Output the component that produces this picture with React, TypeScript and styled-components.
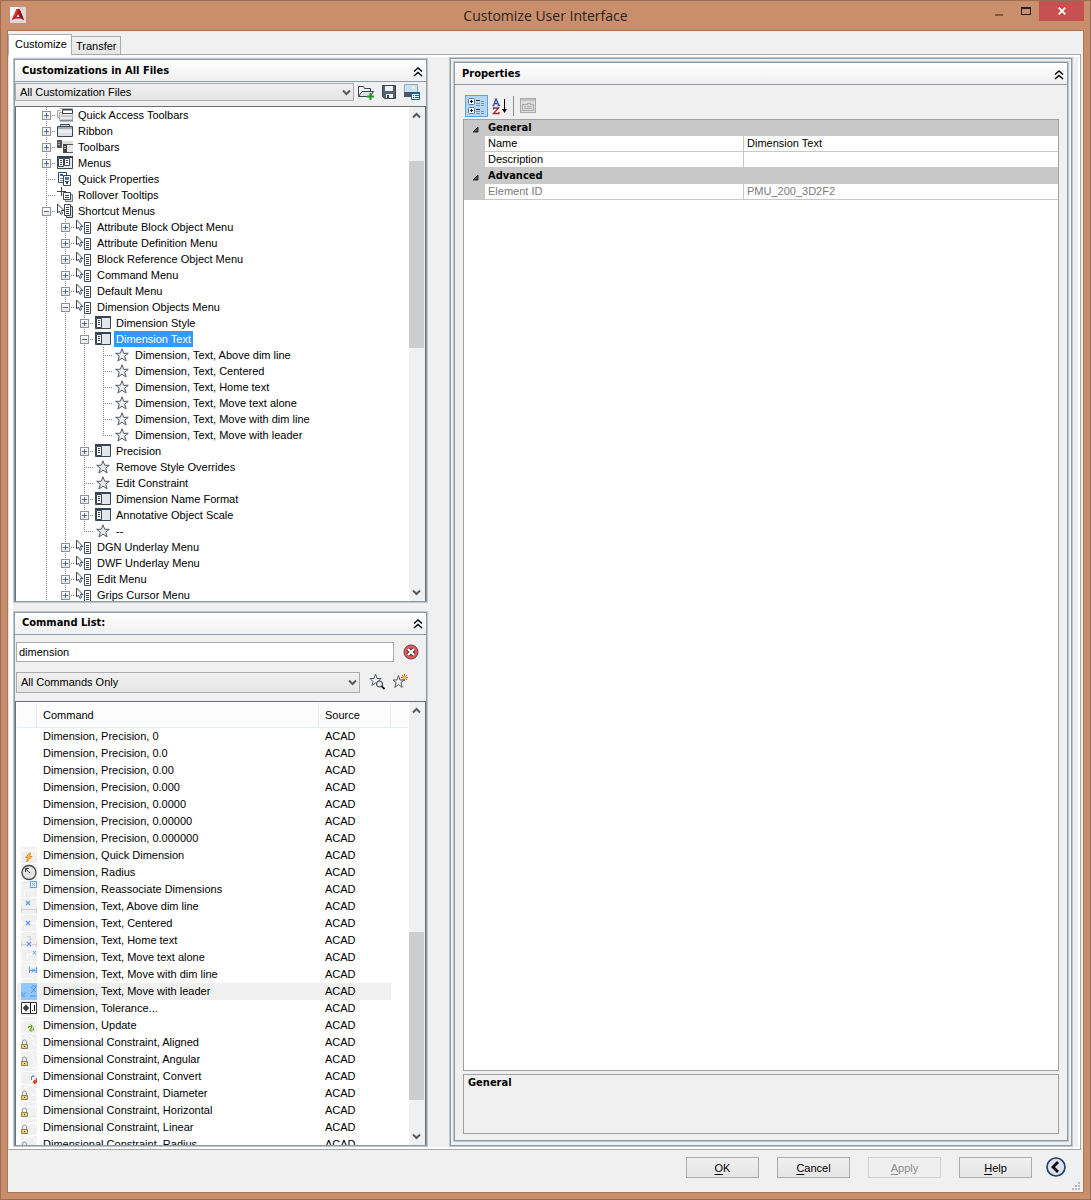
import React from "react";
import styled, { createGlobalStyle, css } from "styled-components";

const face = "#f0f0f0";
const line = "#8f9ba6";
const ui = `"Liberation Sans", Arial, sans-serif`;
const strong = `"DejaVu Sans Condensed", "DejaVu Sans", sans-serif`;

const Global = createGlobalStyle`
  *, *::before, *::after { box-sizing: border-box; }
  body { margin: 0; background: #c98f6c; }
  button, input, select { font: inherit; color: inherit; margin: 0; border-radius: 0; }
`;

/* ---------- window ---------- */

const Window = styled.div`
  height: 100vh;
  min-height: 600px;
  display: flex;
  flex-direction: column;
  padding: 0 6px 6px;
  border: 1px solid #9c6c54;
  background: #c98f6c;
  font: 11px/16px ${ui};
  color: #000;
`;

const TitleBar = styled.header`
  flex: none;
  height: 29px;
  display: grid;
  grid-template-columns: 1fr auto 1fr;
  align-items: start;
`;

const Logo = styled.svg`
  width: 16px;
  height: 16px;
  margin: 6px 0 0 3px;
`;

const Title = styled.h1`
  margin: 0;
  font: 400 14px/29px "Open Sans", sans-serif;
  color: #2b211b;
`;

const Controls = styled.div`
  display: flex;
  justify-content: flex-end;
`;

const ControlButton = styled.button<{ $close?: boolean }>`
  width: ${(p) => (p.$close ? 45 : 27)}px;
  height: 20px;
  padding: 0;
  border: 0;
  background: ${(p) => (p.$close ? "#c75050" : "transparent")};
  display: grid;
  place-items: center;
`;

const Client = styled.div`
  flex: 1;
  min-height: 0;
  display: flex;
  flex-direction: column;
  border: 1px solid #ab7557;
  background: ${face};
`;

const TabStrip = styled.div`
  flex: none;
  height: 23px;
  padding-top: 3px;
  display: flex;
  align-items: flex-end;
`;

const Tab = styled.button<{ $active?: boolean }>`
  height: ${(p) => (p.$active ? 21 : 18)}px;
  padding: ${(p) => (p.$active ? "0 4px 2px 6px" : "0 3px 0 4px")};
  border: 1px solid #acacac;
  border-bottom: 0;
  background: ${(p) => (p.$active ? "#fff" : "linear-gradient(#f0f0f0, #e6e6e6)")};
  ${(p) =>
    p.$active
      ? css`
          position: relative;
          margin-bottom: -1px;
        `
      : css`
          border-left: 0;
        `}
`;

const TabPage = styled.main`
  flex: 1;
  min-height: 0;
  display: flex;
  margin-right: 2px;
  border: 1px solid #a8a8a8;
  border-left-color: #e4e4e4;
  padding: 2px 2px 2px 4px;
  background: #fff;
`;

const Columns = styled.div`
  flex: 1;
  min-width: 0;
  display: grid;
  grid-template-columns: minmax(0, 415fr) minmax(0, 624fr);
  grid-template-rows: minmax(0, 1fr);
  gap: 21px;
  padding-right: 5px;
  background: ${face};
`;

const LeftColumn = styled.div`
  display: flex;
  flex-direction: column;
  gap: 8px;
  padding-top: 1px;
  min-height: 0;
`;

/* ---------- panels ---------- */

const Frame = styled.section<{ $grow?: number }>`
  flex: ${(p) => p.$grow ?? 1} 1 0;
  min-height: 0;
  min-width: 0;
  display: flex;
  flex-direction: column;
  padding: 1px;
  border: 1px solid #bcc6cb;
  box-shadow: inset 0 0 0 1px ${line};
  background: ${face};
`;

const DoubleFrame = styled.div`
  display: flex;
  min-height: 0;
  padding: 3px 3px 4px;
  border: 1px solid #bcc6cb;
  box-shadow: inset 0 0 0 1px ${line};
`;

const PanelHeader = styled.div`
  flex: none;
  height: 22px;
  display: flex;
  align-items: center;
  justify-content: space-between;
  padding: 0 3px 0 7px;
  border-bottom: 1px solid ${line};
  background: linear-gradient(#fff, #f0f0f0);

  > button {
    margin-top: 2px;
  }
`;

const PanelTitle = styled.h2`
  margin: 0;
  font: 700 11px/20px ${strong};
`;

const IconButton = styled.button`
  flex: none;
  padding: 0;
  border: 0;
  background: none;
  display: grid;
  place-items: center;
`;

const ToolRow = styled.div<{ $gap: number; $pad: string }>`
  flex: none;
  display: flex;
  align-items: center;
  gap: ${(p) => p.$gap}px;
  padding: ${(p) => p.$pad};
`;

const IconGroup = styled.div`
  flex: none;
  display: flex;
  gap: 7px;
`;

const SelectBox = styled.div<{ $height: number }>`
  flex: 1;
  min-width: 0;
  display: grid;
  align-items: center;
  height: ${(p) => p.$height}px;

  > * {
    grid-area: 1 / 1;
  }
  > svg {
    justify-self: end;
    margin-right: 3px;
    pointer-events: none;
  }
`;

const Select = styled.select`
  appearance: none;
  width: 100%;
  height: 100%;
  padding: 0 20px 0 4px;
  border: 1px solid #acacac;
  background: linear-gradient(#f0f0f0, #e5e5e5);
`;

const SearchInput = styled.input`
  flex: 1;
  min-width: 0;
  height: 20px;
  padding: 0 2px;
  border: 1px solid #abadb3;
  background: #fff;
`;

const Well = styled.div`
  flex: 1;
  min-height: 0;
  display: flex;
  border: 1px solid #6a6e74;
  border-bottom-width: 0;
  background: #fff;
`;

/* ---------- scroll bar ---------- */

const Track = styled.div`
  flex: none;
  width: 16px;
  display: flex;
  flex-direction: column;
  background: ${face};
`;

const ScrollArrow = styled.button`
  flex: none;
  height: 17px;
  padding: 0 1px 0 0;
  border: 0;
  background: none;
  display: grid;
  place-items: center;
`;

const Space = styled.div<{ $part: number; $thumb?: boolean }>`
  flex: ${(p) => p.$part} 1 0;
  background: ${(p) => (p.$thumb ? "#cdcdcd" : "transparent")};
  margin-right: ${(p) => (p.$thumb ? 1 : 0)}px;
`;

const Chevron = ({ up }: { up?: boolean }) => (
  <svg width="9" height="7" viewBox="0 0 9 7" aria-hidden="true">
    <path d={up ? "M1 5.5 4.5 2 8 5.5" : "M1 1.5 4.5 5 8 1.5"} fill="none" stroke="#5a5a5a" strokeWidth="2" />
  </svg>
);

function ScrollBar({ parts }: { parts: [number, number, number] }) {
  return (
    <Track>
      <ScrollArrow aria-label="Scroll up">
        <Chevron up />
      </ScrollArrow>
      <Space $part={parts[0]} />
      <Space $part={parts[1]} $thumb />
      <Space $part={parts[2]} />
      <ScrollArrow aria-label="Scroll down">
        <Chevron />
      </ScrollArrow>
    </Track>
  );
}

/* ---------- tree ---------- */

const Tree = styled.ul`
  flex: 1;
  min-width: 0;
  margin: 0;
  padding: 0 0 0 21px;
  list-style: none;
  overflow: hidden;
`;

const TreeRow = styled.li`
  display: flex;
  align-items: center;
  height: 16px;
  white-space: nowrap;

  > svg {
    flex: none;
    margin: 0 3px 0 1px;
  }
`;

const dotsDown = "repeating-linear-gradient(to bottom, #808080 0 1px, transparent 1px 2px)";
const dotsAcross = "repeating-linear-gradient(to right, #808080 0 1px, transparent 1px 2px)";

const Guide = styled.span<{ $down: "full" | "half" | "none"; $across?: boolean }>`
  flex: none;
  width: 19px;
  height: 16px;
  display: grid;
  place-items: center;
  background-image: ${dotsDown}, ${dotsAcross};
  background-repeat: no-repeat;
  background-position: 9px 0, 9px 8px;
  background-size:
    1px ${(p) => (p.$down === "full" ? 16 : p.$down === "half" ? 9 : 0)}px,
    ${(p) => (p.$across ? "10px 1px" : "0 0")};
`;

const Expander = styled.button<{ $open?: boolean }>`
  width: 9px;
  height: 9px;
  margin-top: 1px;
  padding: 0;
  border: 1px solid #919191;
  background:
    linear-gradient(#4b63a7, #4b63a7) center / 5px 1px no-repeat,
    linear-gradient(#4b63a7, #4b63a7) center / ${(p) => (p.$open ? "0 0" : "1px 5px")} no-repeat,
    linear-gradient(#fff, #e8e8e8);
`;

const NodeLabel = styled.span<{ $selected?: boolean }>`
  padding: 0 2px;
  ${(p) => p.$selected && "background: #3399ff; color: #fff;"}
`;

const ink = "#3b4453";

const icons: Record<string, React.ReactNode> = {
  quick: (
    <>
      <path d="M2.500 1.500h13v12h-11" fill="#f4f4f4" stroke="#b4b4b4" />
      <path d="M.5 3.500h3M.5 3.500v7h2M2.500 5.500v8h13v-4h-10v-4z" fill="#e9e9e9" stroke="#a6a6a6" />
      <path d="M5.500 2.500h10v4h-10z" fill="#fff" stroke={ink} />
      <path d="M6 3h9v1H6z" fill="#9ba0a9" />
      <path d="M4 8h11v2H4zM4 12h11v1H4z" fill="#c6c9ce" />
      <path d="M3 14h13" stroke="#6f757f" />
    </>
  ),
  ribbon: (
    <>
      <path d="M3.500 4V1.500h9V4" fill="#d5d8dd" stroke={ink} />
      <path d="M.5 3.500h15v10H.5z" fill="#dcdfe4" stroke={ink} />
      <path d="M1 4h14v2H1z" fill="#a8aeb8" />
      <path d="M1 7h14v3H1z" fill="#eceef1" />
    </>
  ),
  toolbars: (
    <>
      <path d="M0 1h5v8H0z" fill="#555" />
      <path d="M5 2h11v3H5z" fill="#ddd" />
      <path d="M1 3h2v1H1zM1 5h2v1H1z" fill="#bbb" />
      <path d="M6 5h10v9H6z" fill="#e8e8e8" />
      <path d="M6 5.500h10M6.500 5v8.500H16" stroke="#555" fill="none" />
      <path d="M6 5h4v9H6z" fill="#444" />
      <path d="M7 7h2v1H7zM7 9h2v1H7z" fill="#bbb" />
    </>
  ),
  menus: (
    <>
      <path d="M.5 1.500h15v12H.5z" fill="#e6e8eb" stroke={ink} />
      <path d="M0 1h16v2H0z" fill={ink} />
      <path d="M1.500 3.500h5v8h-5zM7.500 3.500h5v7h-5z" fill="#fff" stroke={ink} />
      <path d="M3 5.500h2M3 7.500h2M3 9.500h2M9 5.500h2M9 7.500h2" stroke={ink} />
    </>
  ),
  props: (
    <>
      <path d="M1.500 1.500h8v10h-8z" fill="#fff" stroke={ink} />
      <path d="M3 3h3v2H3z" fill="#1d5fb0" />
      <path d="M3 7h3v1H3zM3 9h3v1H3z" fill="#888" />
      <path d="M6.500 4.500h7v10h-7z" fill="#fff" stroke={ink} />
      <path d="M8 6h4v3H8z" fill="#3f7cc4" />
      <path d="M8 10h4v1H8zM9 11h2v2H9z" fill={ink} />
    </>
  ),
  tooltips: (
    <>
      <path d="M4.500 0v9M0 4.500h9" stroke={ink} />
      <path d="M8.500 7.500h7v7h-7z" fill="#ddd" stroke="#777" />
      <path d="M6.500 5.500h7v7h-7z" fill="#fff" stroke={ink} />
      <path d="M8 8.500h4M8 10.500h4" stroke={ink} />
    </>
  ),
  shortcuts: (
    <>
      <path d="M.5 1v9l2-2 1.500 3.500 1.500-1L4.500 7.500H7z" fill="#fff" stroke={ink} />
      <path d="M9.500 3.500h6v11h-6z" fill="#ddd" stroke={ink} />
      <path d="M7.500 1.500h6v11h-6z" fill="#fff" stroke={ink} />
      <path d="M9 4.500h3M9 6.500h3M9 8.500h3M9 10.500h3" stroke={ink} />
    </>
  ),
  shortcut: (
    <>
      <path d="M.5 1v9l2-2 1.500 3.500 1.500-1L4.500 7.500H7z" fill="#fff" stroke={ink} />
      <path d="M8.500 3.500h6v11h-6z" fill="#fff" stroke={ink} />
      <path d="M10 6.500h3M10 8.500h3M10 10.500h3M10 12.500h3" stroke={ink} />
    </>
  ),
  submenu: (
    <>
      <path d="M.5 1.500h15v12H.5z" fill="#e3e6ea" stroke={ink} />
      <path d="M0 1h16v2H0z" fill={ink} />
      <path d="M1.500 3.500h5v9h-5z" fill="#fff" stroke={ink} />
      <path d="M3 5.500h2M3 7.500h2M3 9.500h2" stroke={ink} />
    </>
  ),
};

const starPath = "M8 1.800 9.700 6.300H14.300L10.700 9.200 12.100 14 8 11.200 3.900 14 5.300 9.200 1.700 6.300H6.300z";

const Glyph = ({ name }: { name: string }) => (
  <svg width="16" height="16" viewBox="0 0 16 16" aria-hidden="true">
    {name === "star" ? <path d={starPath} fill="#ececec" stroke="#555b66" /> : icons[name]}
  </svg>
);

type Node = { d: number; icon: string; text: string; kind?: "open" | "closed"; last?: boolean; sel?: boolean };

const n = (d: number, icon: string, text: string, kind?: "open" | "closed", last?: boolean, sel?: boolean): Node => ({
  d, icon, text, kind, last, sel,
});

const nodes: Node[] = [
  n(0, "quick", "Quick Access Toolbars", "closed"),
  n(0, "ribbon", "Ribbon", "closed"),
  n(0, "toolbars", "Toolbars", "closed"),
  n(0, "menus", "Menus", "closed"),
  n(0, "props", "Quick Properties"),
  n(0, "tooltips", "Rollover Tooltips"),
  n(0, "shortcuts", "Shortcut Menus", "open"),
  n(1, "shortcut", "Attribute Block Object Menu", "closed"),
  n(1, "shortcut", "Attribute Definition Menu", "closed"),
  n(1, "shortcut", "Block Reference Object Menu", "closed"),
  n(1, "shortcut", "Command Menu", "closed"),
  n(1, "shortcut", "Default Menu", "closed"),
  n(1, "shortcut", "Dimension Objects Menu", "open"),
  n(2, "submenu", "Dimension Style", "closed"),
  n(2, "submenu", "Dimension Text", "open", false, true),
  n(3, "star", "Dimension, Text, Above dim line"),
  n(3, "star", "Dimension, Text, Centered"),
  n(3, "star", "Dimension, Text, Home text"),
  n(3, "star", "Dimension, Text, Move text alone"),
  n(3, "star", "Dimension, Text, Move with dim line"),
  n(3, "star", "Dimension, Text, Move with leader", undefined, true),
  n(2, "submenu", "Precision", "closed"),
  n(2, "star", "Remove Style Overrides"),
  n(2, "star", "Edit Constraint"),
  n(2, "submenu", "Dimension Name Format", "closed"),
  n(2, "submenu", "Annotative Object Scale", "closed"),
  n(2, "star", "--", undefined, true),
  n(1, "shortcut", "DGN Underlay Menu", "closed"),
  n(1, "shortcut", "DWF Underlay Menu", "closed"),
  n(1, "shortcut", "Edit Menu", "closed"),
  n(1, "shortcut", "Grips Cursor Menu", "closed"),
];

function TreeItem({ node }: { node: Node }) {
  return (
    <TreeRow>
      {Array.from({ length: node.d }, (_, i) => (
        <Guide key={i} $down="full" />
      ))}
      <Guide $down={node.last ? "half" : "full"} $across>
        {node.kind && <Expander $open={node.kind === "open"} aria-label={`Toggle ${node.text}`} />}
      </Guide>
      <Glyph name={node.icon} />
      <NodeLabel $selected={node.sel}>{node.text}</NodeLabel>
    </TreeRow>
  );
}

/* ---------- command table ---------- */

const TableArea = styled.div`
  flex: 1;
  min-width: 0;
  overflow: hidden;
  padding: 1px 1px 0;
`;

const CommandTable = styled.table`
  width: 100%;
  table-layout: fixed;
  border-collapse: separate;
  border-spacing: 0;
  white-space: nowrap;

  th {
    height: 25px;
    padding: 0 5px 0 6px;
    font-weight: 400;
    text-align: left;
    border-right: 1px solid #e3eefa;
    border-bottom: 1px solid #e3eefa;
    background: #fcfcfc;
  }
  th:last-child {
    border-right: 0;
  }
  td {
    height: 17px;
    padding: 0 6px;
  }
  td:first-child {
    padding: 0 0 0 4px;
  }
  td svg {
    display: block;
  }
`;

const Col = styled.col<{ $w?: number }>`
  width: ${(p) => (p.$w ? `${p.$w}px` : "auto")};
`;

const CommandRow = styled.tr<{ $selected?: boolean }>`
  td:not(:last-child) {
    background: ${(p) => (p.$selected ? "#f0f0f0" : "transparent")};
  }
`;

const blue = "#5b9bf3";
const Cross = ({ x, y }: { x: number; y: number }) => (
  <path d={`M${x} ${y}l4 4M${x + 4} ${y}l-4 4`} stroke={blue} strokeWidth="1.300" fill="none" />
);
const Faint = ({ d }: { d: string }) => <path d={d} stroke="#fff" fill="none" />;
const Lock = () => (
  <>
    <path d="M1.500 10.500V8a2 2 0 0 1 4 0v2.500" fill="none" stroke="#999" />
    <path d="M.5 10.500h6v4h-6z" fill="#f3cf6b" stroke="#8d8468" />
    <path d="M3 12h1v1H3z" fill="#4a3a10" />
  </>
);

const cmdIcons: Record<string, React.ReactNode> = {
  quick: (
    <>
      <Faint d="M1 3.500h14M1.500 1v5M14.500 1v5" />
      <path d="M8.500 6 4.500 10.500H7L5.500 15l5.500-5.500H8.500L9.500 6z" fill="#ffc62b" stroke="#d9791b" strokeWidth=".8" />
    </>
  ),
  radius: (
    <>
      <circle cx="8" cy="8.500" r="7" fill="#e4e4e4" stroke="#444" strokeWidth="1.300" />
      <path d="M9 9 4.500 5M4.500 8V4.500H8" stroke="#333" fill="none" />
    </>
  ),
  reassoc: (
    <>
      <Faint d="M0 4.500h8M3.500 15V9M3 9.500h10" />
      <path d="M9.500 .5h6v6h-6z" fill="#fff" stroke={blue} />
      <path d="m11 2 3 3M14 2l-3 3" stroke={blue} />
    </>
  ),
  above: (
    <>
      <path d="M1 11.500h14M.5 9v6M15.500 9v6" stroke="#d0d0d0" />
      <Cross x={5} y={3} />
    </>
  ),
  center: (
    <>
      <Faint d="M0 8.500h5M11 8.500h5M.5 5v7M15.500 5v7" />
      <Cross x={5} y={6} />
    </>
  ),
  home: (
    <>
      <path d="M1 12.500h5M11 12.500h5M.5 10v5M15.500 10v5M6 4.500h3.500V8M8 6.500l1.500 2 1.500-2" stroke="#cfcfcf" fill="none" />
      <Cross x={6} y={10} />
    </>
  ),
  alone: (
    <>
      <Faint d="M1 12.500h12M.5 10v5M6.500 10V5h5" />
      <path d="m12 2 3 3.500M15 2l-3 3.500" stroke={blue} />
    </>
  ),
  dimline: (
    <>
      <Faint d="M0 12.500h12M.5 10v5M11.500 10v5" />
      <path d="M8.500 1v6M15.500 1v6M9 4.500h6M11 2.500l3 4M14 2.500l-3 4" stroke={blue} fill="none" />
    </>
  ),
  leader: (
    <>
      <path d="M0 0h16v17H0z" fill="#93c6fb" />
      <path d="M1 9v4h4M2 12l3-3" stroke="#5a9de6" fill="none" />
      <path d="M9 13h6M10 4l5 5M15 4l-5 6M11 3h5" stroke="#4d93f0" fill="none" />
    </>
  ),
  tolerance: (
    <>
      <path d="M.5 2.500h15v11H.5z" fill="#fff" stroke="#333" />
      <path d="M9.500 3v10M2 8h6M5 4.500v7M13.500 5v6M11 10.500h1" stroke="#111" />
      <circle cx="5" cy="8" r="2" fill="none" stroke="#111" />
    </>
  ),
  update: (
    <>
      <Faint d="M1 3.500h14M1.500 1v5M14.500 1v5" />
      <path d="M7.500 11V9.500H11M9.500 7.500l2 2-2 2M12.500 10.500V13H9M10.500 11l-2 2 2 2" stroke="#5e9a12" fill="none" />
    </>
  ),
  aligned: (<><Faint d="m4 1 11 11M9 2l5 5" /><Lock /></>),
  angular: (<><Faint d="M8 2c4 3 6 7 5 12M10 1l3 4" /><Lock /></>),
  convert: (
    <>
      <Faint d="M1 3.500h14M1.500 1v5M14.500 1v5" />
      <path d="M10.500 12V8.500h2M11.500 7l2 2" stroke="#3f86e0" fill="none" />
      <path d="M15.500 10v4h-3M14.500 16l-2-2 2-2" stroke="#d5401d" strokeWidth="1.400" fill="none" />
    </>
  ),
  diameter: (<><Faint d="M3 3a7 7 0 0 1 11 10M4 2l9 9" /><Lock /></>),
  horizontal: (<><Faint d="M1 4.500h14M1.500 2v5M14.500 2v5" /><Lock /></>),
  linear: (<><Faint d="M1 4.500h14M1.500 2v5M14.500 2v5" /><Lock /></>),
  radial: (<><Faint d="M3 3a7 7 0 0 1 11 10" /><Lock /></>),
};

const CommandIcon = ({ name }: { name: string }) => (
  <svg width="16" height="17" viewBox="0 0 16 17" aria-hidden="true">
    <path d="M0 0h16v16H0z" fill="#f0f0f0" />
    {cmdIcons[name]}
  </svg>
);

const commands: [string, string][] = [
  ["", "Dimension, Precision, 0"],
  ["", "Dimension, Precision, 0.0"],
  ["", "Dimension, Precision, 0.00"],
  ["", "Dimension, Precision, 0.000"],
  ["", "Dimension, Precision, 0.0000"],
  ["", "Dimension, Precision, 0.00000"],
  ["", "Dimension, Precision, 0.000000"],
  ["quick", "Dimension, Quick Dimension"],
  ["radius", "Dimension, Radius"],
  ["reassoc", "Dimension, Reassociate Dimensions"],
  ["above", "Dimension, Text, Above dim line"],
  ["center", "Dimension, Text, Centered"],
  ["home", "Dimension, Text, Home text"],
  ["alone", "Dimension, Text, Move text alone"],
  ["dimline", "Dimension, Text, Move with dim line"],
  ["leader", "Dimension, Text, Move with leader"],
  ["tolerance", "Dimension, Tolerance..."],
  ["update", "Dimension, Update"],
  ["aligned", "Dimensional Constraint, Aligned"],
  ["angular", "Dimensional Constraint, Angular"],
  ["convert", "Dimensional Constraint, Convert"],
  ["diameter", "Dimensional Constraint, Diameter"],
  ["horizontal", "Dimensional Constraint, Horizontal"],
  ["linear", "Dimensional Constraint, Linear"],
  ["radial", "Dimensional Constraint, Radius"],
];

/* ---------- property grid ---------- */

const PropertyToolbar = styled.div`
  flex: none;
  display: flex;
  align-items: center;
  gap: 1px;
  height: 34px;
  padding: 10px 10px 2px;
`;

const ToolButton = styled.button<{ $pressed?: boolean }>`
  width: 23px;
  height: 22px;
  padding: 0;
  display: grid;
  place-items: center;
  border: 1px solid ${(p) => (p.$pressed ? "#5ea2e6" : "transparent")};
  background: ${(p) => (p.$pressed ? "#b5d5f5" : "transparent")};
`;

const Divider = styled.span`
  width: 1px;
  height: 20px;
  margin-right: 2px;
  background: #8c8c8c;
`;

const GridBox = styled.div`
  flex: 1;
  min-height: 0;
  margin: 0 8px 3px;
  border: 1px solid #a0a0a0;
  background: #fff;
  overflow: hidden;
`;

const PropertyTable = styled.table`
  width: 100%;
  table-layout: fixed;
  border-collapse: separate;
  border-spacing: 0;
  white-space: nowrap;

  td, th {
    height: 16px;
    padding: 0 3px;
    line-height: 15px;
    text-align: left;
    font-weight: 400;
  }
`;

const Gutter = styled.td`
  background: #c8c8c8;
`;

const GroupRow = styled.tr`
  background: #c8c8c8;

  && th {
    height: 16px;
    font: 700 11px/16px ${strong};
  }
  svg {
    display: block;
    margin: 2px 0 0 5px;
  }
`;

const PropertyRow = styled.tr<{ $muted?: boolean }>`
  color: ${(p) => (p.$muted ? "#7a7a7a" : "#000")};

  th, td:last-child {
    border-bottom: 1px solid #c8c8c8;
  }
  th {
    border-right: 1px solid #c8c8c8;
  }
`;

const HelpBox = styled.div`
  flex: none;
  height: 60px;
  margin: 0 8px 6px;
  padding: 0 4px;
  border: 1px solid #a0a0a0;
  font: 700 11px/16px ${strong};
`;

const groups: { name: string; rows: [string, string, boolean?][] }[] = [
  { name: "General", rows: [["Name", "Dimension Text"], ["Description", ""]] },
  { name: "Advanced", rows: [["Element ID", "PMU_200_3D2F2", true]] },
];

/* ---------- footer ---------- */

const Footer = styled.footer`
  flex: none;
  height: 42px;
  display: flex;
  align-items: flex-start;
  justify-content: flex-end;
  gap: 18px;
  padding: 7px 2px 0 0;
`;

const DialogButton = styled.button`
  width: 73px;
  height: 21px;
  padding: 0;
  border: 1px solid #acacac;
  background: linear-gradient(#f0f0f0, #e5e5e5);

  &:disabled {
    color: #8b8b8b;
    border-color: #d2d2d2;
    background: #efefef;
  }
  u {
    text-underline-offset: 2px;
  }
`;

const FooterEnd = styled.div`
  display: flex;
  align-items: flex-end;
  height: 34px;
  margin-left: -4px;
  gap: 6px;

  > button {
    align-self: flex-start;
  }
`;

const Collapse = ({ label }: { label: string }) => (
  <IconButton aria-label={label}>
    <svg width="10" height="10" viewBox="0 0 10 10">
      <path d="M1 4.500 5 1l4 3.500M1 9l4-3.500L9 9" fill="none" stroke="#000" strokeWidth="1.400" />
    </svg>
  </IconButton>
);

const Mnemonic = ({ text }: { text: string }) => (
  <>
    <u>{text[0]}</u>
    {text.slice(1)}
  </>
);

export default function App() {
  return (
    <>
      <Global />
      <Window>
        <TitleBar>
          <Logo viewBox="0 0 16 16" aria-hidden="true">
            <path d="M0 0h16v16H0z" fill="#dfd6d8" />
            <path d="M0 0h9L0 12z" fill="#f8f6f7" />
            <path d="M6.500 2h3L14 13l-3-1.500H5.500L2 13z" fill="#b3161b" />
            <path d="M6.500 2h1.500L6 8l-4 5z" fill="#d9433f" />
            <path d="m8 7 1.500 3h-3z" fill="#f6e6e6" />
            <path d="M9.500 2 14 13l-3-2z" fill="#7d0d12" />
          </Logo>
          <Title>Customize User Interface</Title>
          <Controls>
            <ControlButton aria-label="Minimize">
              <svg width="8" height="16" viewBox="0 0 8 16"><path d="M0 11h8v2H0z" fill="#7e5a46" /></svg>
            </ControlButton>
            <ControlButton aria-label="Maximize">
              <svg width="10" height="16" viewBox="0 0 10 16" shapeRendering="crispEdges">
                <path d="M.5 4.500h9v7h-9zM0 5h10" fill="none" stroke="#222" />
              </svg>
            </ControlButton>
            <ControlButton $close aria-label="Close">
              <svg width="8" height="8" viewBox="0 0 8 8"><path d="m.7 .7 6.600 6.600M7.300 .7.7 7.300" stroke="#fff" strokeWidth="1.800" /></svg>
            </ControlButton>
          </Controls>
        </TitleBar>

        <Client>
          <TabStrip role="tablist">
            <Tab $active role="tab" aria-selected="true">Customize</Tab>
            <Tab role="tab" aria-selected="false">Transfer</Tab>
          </TabStrip>

          <TabPage>
            <Columns>
              <LeftColumn>
                <Frame $grow={545}>
                  <PanelHeader>
                    <PanelTitle>Customizations in All Files</PanelTitle>
                    <Collapse label="Collapse customizations" />
                  </PanelHeader>
                  <ToolRow $gap={4} $pad="1px 6px 5px 0">
                    <SelectBox $height={18}>
                      <Select aria-label="Customization files" defaultValue="all">
                        <option value="all">All Customization Files</option>
                      </Select>
                      <Chevron />
                    </SelectBox>
                    <IconGroup>
                      <IconButton aria-label="Load partial file">
                        <svg width="16" height="16" viewBox="0 0 16 16">
                          <path d="M.5 12.500v-10h5l1 2h6v3" fill="#f5f5f5" stroke={ink} />
                          <path d="M.5 12.500 4 7.500h11.500L13 11.500M.5 12.500H9" fill="#dfe2e6" stroke={ink} />
                          <path d="M12.500 9v7M9 12.500h7" stroke="#15a01a" strokeWidth="2" />
                        </svg>
                      </IconButton>
                      <IconButton aria-label="Save all">
                        <svg width="16" height="16" viewBox="0 0 16 16">
                          <path d="M1.500 1.500h13v13h-11l-2-2z" fill="#5b6373" stroke={ink} />
                          <path d="M4 2h8v5H4zM5 10h7v4H5z" fill="#f2f3f5" />
                          <path d="M6 11h2v3H6z" fill={ink} />
                        </svg>
                      </IconButton>
                      <IconButton aria-label="Image manager">
                        <svg width="16" height="16" viewBox="0 0 16 16">
                          <path d="M.5 .5h13v12H.5z" fill="#c9e1f7" stroke="#8ea6bf" />
                          <path d="M0 8h7v5H0z" fill="#4d5563" />
                          <circle cx="9.500" cy="3.500" r="1.500" fill="#fff3b0" />
                          <path d="M7.500 8.500h8v7h-8z" fill="#fff" stroke="#1660a8" />
                          <path d="M7 8h9v2H7z" fill="#1660a8" />
                          <path d="M9 11.500h1M11 11.500h4M9 13.500h1M11 13.500h4" stroke="#1660a8" />
                        </svg>
                      </IconButton>
                    </IconGroup>
                  </ToolRow>
                  <Well>
                    <Tree>
                      {nodes.map((node, i) => (
                        <TreeItem key={i} node={node} />
                      ))}
                    </Tree>
                    <ScrollBar parts={[37, 187, 236]} />
                  </Well>
                </Frame>

                <Frame $grow={536}>
                  <PanelHeader>
                    <PanelTitle>Command List:</PanelTitle>
                    <Collapse label="Collapse command list" />
                  </PanelHeader>
                  <ToolRow $gap={9} $pad="7px 7px 5px 1px">
                    <SearchInput aria-label="Search commands" defaultValue="dimension" />
                    <IconButton aria-label="Clear search">
                      <svg width="16" height="16" viewBox="0 0 16 16">
                        <circle cx="8" cy="8" r="7" fill="#e2595b" stroke="#6d3a3c" />
                        <path d="m5 5 6 6M11 5l-6 6" stroke="#59282a" strokeWidth="4" />
                        <path d="m5 5 6 6M11 5l-6 6" stroke="#fff" strokeWidth="2.200" />
                      </svg>
                    </IconButton>
                  </ToolRow>
                  <ToolRow $gap={9} $pad="5px 18px 8px 1px">
                    <SelectBox $height={21}>
                      <Select aria-label="Command filter" defaultValue="all">
                        <option value="all">All Commands Only</option>
                      </Select>
                      <Chevron />
                    </SelectBox>
                    <IconGroup>
                      <IconButton aria-label="Find command">
                        <svg width="16" height="16" viewBox="0 0 16 16">
                          <path d="M6.500 0 8 4.500h4L9 7.500 10 11.500 6.500 9 3 11.500l1-4L1 4.500h4z" fill="#eee" stroke="#555b66" />
                          <circle cx="10.500" cy="10" r="3" fill="#dff0ee" stroke="#333" />
                          <path d="m12.500 12 3 3" stroke="#222" strokeWidth="1.800" />
                        </svg>
                      </IconButton>
                      <IconButton aria-label="Create command">
                        <svg width="16" height="16" viewBox="0 0 16 16">
                          <path d="M6.500 1.500 8 6h4L9 8.500l1.200 5-3.700-3-3.700 3L4 8.500 1 6h4z" fill="#eee" stroke="#555b66" />
                          <path d="M12.500 0v7M9 3.500h7M10 1l5 5M15 1l-5 5" stroke="#dd4f16" />
                          <circle cx="12.500" cy="3.500" r="1.500" fill="#ffd84a" />
                        </svg>
                      </IconButton>
                    </IconGroup>
                  </ToolRow>
                  <Well>
                    <TableArea>
                      <CommandTable>
                        <colgroup>
                          <Col $w={20} />
                          <Col />
                          <Col $w={72} />
                          <Col $w={17} />
                        </colgroup>
                        <thead>
                          <tr>
                            <th aria-label="Image" />
                            <th>Command</th>
                            <th>Source</th>
                            <th aria-label="Filler" />
                          </tr>
                        </thead>
                        <tbody>
                          {commands.map(([icon, text]) => (
                            <CommandRow key={text} $selected={icon === "leader"}>
                              <td>{icon && <CommandIcon name={icon} />}</td>
                              <td>{text}</td>
                              <td>ACAD</td>
                              <td />
                            </CommandRow>
                          ))}
                        </tbody>
                      </CommandTable>
                    </TableArea>
                    <ScrollBar parts={[212, 168, 28]} />
                  </Well>
                </Frame>
              </LeftColumn>

              <DoubleFrame>
                <Frame>
                  <PanelHeader>
                    <PanelTitle>Properties</PanelTitle>
                    <Collapse label="Collapse properties" />
                  </PanelHeader>
                  <PropertyToolbar>
                    <ToolButton $pressed aria-label="Categorized">
                      <svg width="17" height="16" viewBox="0 0 17 16">
                        <rect x=".5" y=".5" width="6" height="6" rx="1" fill="#fff" stroke="#4a78ad" />
                        <rect x=".5" y="9.500" width="6" height="6" rx="1" fill="#fff" stroke="#4a78ad" />
                        <path d="M2 3.500h3M3.500 2v3M2 12.500h3M3.500 11v3" stroke="#000" />
                        <path d="M8 2.500h4M8 11.500h4" stroke="#333" />
                        <path d="M8 5.500h4M13 5.500h3M8 7.500h4M13 7.500h3M13 3.500h3M8 13.500h4M13 13.500h3M8 15.500h4M13 15.500h3" stroke="#7d93a8" />
                      </svg>
                    </ToolButton>
                    <ToolButton aria-label="Alphabetical">
                      <svg width="17" height="17" viewBox="0 0 17 17">
                        <path d="M1.500 7.500 4 1l3 6.500M2.500 5.500h4M.5 7.500h2M5.500 7.500h2.500" fill="none" stroke="#3b50a3" strokeWidth="1.300" />
                        <path d="M1.500 11.500V10h5L1.500 15.500h5.500V14" fill="none" stroke="#9c2d35" strokeWidth="1.300" />
                        <path d="M12.500 1v12" stroke="#000" />
                        <path d="M10 11h5l-2.500 4z" />
                      </svg>
                    </ToolButton>
                    <Divider />
                    <ToolButton disabled aria-label="Property pages">
                      <svg width="17" height="16" viewBox="0 0 17 16" shapeRendering="crispEdges">
                        <path d="M.5 .5h15v14H.5z" fill="#dcdcdc" stroke="#a9a9a9" />
                        <path d="M1 1h14v2H1z" fill="#c2c2c2" />
                        <path d="M2.500 6.500h5v-1h3v1h3v6h-11zM4 8.500h2M7 8.500h5M4 10.500h8" fill="none" stroke="#adadad" />
                      </svg>
                    </ToolButton>
                  </PropertyToolbar>
                  <GridBox>
                    <PropertyTable>
                      <colgroup>
                        <Col $w={21} />
                        <Col $w={259} />
                        <Col />
                      </colgroup>
                      {groups.map((g) => (
                        <tbody key={g.name}>
                          <GroupRow>
                            <td>
                              <svg width="7" height="7" viewBox="0 0 7 7"><path d="M6 1v5H1z" fill="#555" stroke="#222" /></svg>
                            </td>
                            <th colSpan={2}>{g.name}</th>
                          </GroupRow>
                          {g.rows.map(([key, value, muted]) => (
                            <PropertyRow key={key} $muted={muted}>
                              <Gutter />
                              <th scope="row">{key}</th>
                              <td>{value}</td>
                            </PropertyRow>
                          ))}
                        </tbody>
                      ))}
                    </PropertyTable>
                  </GridBox>
                  <HelpBox>General</HelpBox>
                </Frame>
              </DoubleFrame>
            </Columns>
          </TabPage>

          <Footer>
            <DialogButton><Mnemonic text="OK" /></DialogButton>
            <DialogButton><Mnemonic text="Cancel" /></DialogButton>
            <DialogButton disabled><Mnemonic text="Apply" /></DialogButton>
            <DialogButton><Mnemonic text="Help" /></DialogButton>
            <FooterEnd>
              <IconButton aria-label="Less options">
                <svg width="20" height="20" viewBox="0 0 20 20">
                  <circle cx="10" cy="10" r="9" fill="#dfe0ee" stroke="#16406f" strokeWidth="1.600" />
                  <path d="m12 5-5 5 5 5" fill="none" stroke="#000" strokeWidth="2.800" />
                </svg>
              </IconButton>
              <svg width="9" height="9" viewBox="0 0 9 9" aria-hidden="true">
                <path d="M6 0h2v2H6zM6 3h2v2H6zM3 3h2v2H3zM6 6h2v2H6zM3 6h2v2H3zM0 6h2v2H0z" fill="#bcbcbc" />
              </svg>
            </FooterEnd>
          </Footer>
        </Client>
      </Window>
    </>
  );
}
